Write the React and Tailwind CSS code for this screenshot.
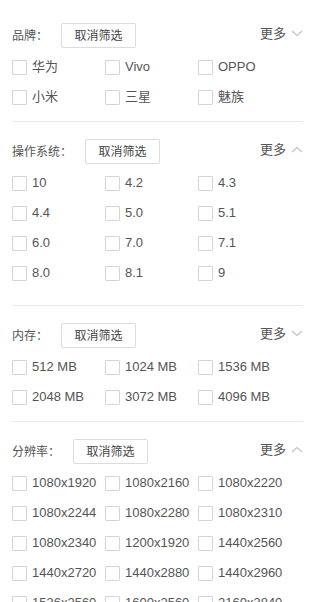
import React from "react";

const sections = [
  {
    label: "品牌：",
    expanded: false,
    options: ["华为", "Vivo", "OPPO", "小米", "三星", "魅族"],
    first: true,
  },
  {
    label: "操作系统：",
    expanded: true,
    options: ["10", "4.2", "4.3", "4.4", "5.0", "5.1", "6.0", "7.0", "7.1", "8.0", "8.1", "9"],
  },
  {
    label: "内存：",
    expanded: false,
    options: ["512 MB", "1024 MB", "1536 MB", "2048 MB", "3072 MB", "4096 MB"],
  },
  {
    label: "分辨率：",
    expanded: true,
    options: [
      "1080x1920", "1080x2160", "1080x2220",
      "1080x2244", "1080x2280", "1080x2310",
      "1080x2340", "1200x1920", "1440x2560",
      "1440x2720", "1440x2880", "1440x2960",
      "1536x2560", "1600x2560", "2160x3840",
    ],
    last: true,
  },
];

const Chevron = ({ up }) => (
  <svg width="12" height="7" viewBox="0 0 12 7" className="ml-[5px]">
    <polyline
      points={up ? "1,6 6,1.5 11,6" : "1,1 6,5.5 11,1"}
      fill="none"
      stroke="#c4c4c4"
      strokeWidth="1.2"
    />
  </svg>
);

const Section = ({ section }) => {
  const pt = section.first ? "pt-[23px]" : "pt-[17px]";
  const pb = section.expanded ? "pb-[17px]" : "pb-[9px]";
  return (
    <div className={`${pt} ${section.last ? "" : pb}`}>
      <div className="flex items-center h-[25px]">
        <span className="text-[12px] text-[#555]">{section.label}</span>
        <button className="ml-[13px] h-[25px] w-[75px] border border-[#dcdcdc] rounded-[2px] bg-white text-[12px] text-[#444]">
          取消筛选
        </button>
        <div className="ml-auto flex items-center self-start mt-[1px] text-[13px] text-[#555]">
          更多
          <Chevron up={section.expanded} />
        </div>
      </div>
      <div className="grid grid-cols-[93px_93px_1fr] mt-[4px]">
        {section.options.map((opt) => (
          <label key={opt} className="flex items-center h-[30px]">
            <span className="w-[15px] h-[15px] border border-[#d4d4d4] rounded-[1px] bg-white shrink-0"></span>
            <span className="ml-[5px] text-[13px] text-[#555] whitespace-nowrap">{opt}</span>
          </label>
        ))}
      </div>
    </div>
  );
};

export default function App() {
  return (
    <div
      className="bg-white px-3 w-[315px]"
      style={{ fontFamily: '"Liberation Sans", "Noto Sans CJK SC", sans-serif' }}
    >
      {sections.map((s, i) => (
        <div key={i}>
          <Section section={s} />
          {!s.last && <div className="h-px bg-[#e8e8e8]"></div>}
        </div>
      ))}
    </div>
  );
}
